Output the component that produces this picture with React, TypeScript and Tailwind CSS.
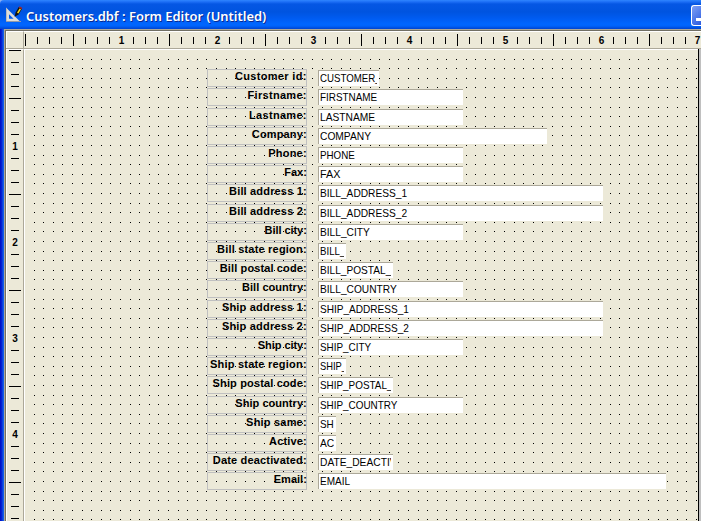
type Row = { label: string; tracking: string; value: string; scale: string; width: string; height: string };

const rows: Row[] = [
  { label: "Customer id:", tracking: "tracking-[0.34px]", value: "CUSTOMER_", scale: "scale-x-[0.88]", width: "w-[61px]", height: "h-[19px]" },
  { label: "Firstname:", tracking: "tracking-[0.3px]", value: "FIRSTNAME", scale: "scale-x-[0.9]", width: "w-[145px]", height: "h-5" },
  { label: "Lastname:", tracking: "tracking-[0.3px]", value: "LASTNAME", scale: "scale-x-[0.93]", width: "w-[145px]", height: "h-[19px]" },
  { label: "Company:", tracking: "tracking-[0.15px]", value: "COMPANY", scale: "scale-x-[0.93]", width: "w-[229px]", height: "h-[19px]" },
  { label: "Phone:", tracking: "tracking-[0.2px]", value: "PHONE", scale: "scale-x-[0.89]", width: "w-[145px]", height: "h-[19px]" },
  { label: "Fax:", tracking: "tracking-normal", value: "FAX", scale: "scale-x-[0.98]", width: "w-[145px]", height: "h-[19px]" },
  { label: "Bill address 1:", tracking: "tracking-[0.17px]", value: "BILL_ADDRESS_1", scale: "scale-x-[0.925]", width: "w-[285px]", height: "h-5" },
  { label: "Bill address 2:", tracking: "tracking-[0.17px]", value: "BILL_ADDRESS_2", scale: "scale-x-[0.925]", width: "w-[285px]", height: "h-[19px]" },
  { label: "Bill city:", tracking: "tracking-[-0.05px]", value: "BILL_CITY", scale: "scale-x-[0.925]", width: "w-[145px]", height: "h-[19px]" },
  { label: "Bill state region:", tracking: "tracking-[0.2px]", value: "BILL_", scale: "scale-x-[0.88]", width: "w-[28px]", height: "h-[19px]" },
  { label: "Bill postal code:", tracking: "tracking-[0.12px]", value: "BILL_POSTAL_", scale: "scale-x-[0.92]", width: "w-[75px]", height: "h-[19px]" },
  { label: "Bill country:", tracking: "tracking-[0.05px]", value: "BILL_COUNTRY", scale: "scale-x-[0.925]", width: "w-[145px]", height: "h-5" },
  { label: "Ship address 1:", tracking: "tracking-[0.2px]", value: "SHIP_ADDRESS_1", scale: "scale-x-[0.915]", width: "w-[285px]", height: "h-[19px]" },
  { label: "Ship address 2:", tracking: "tracking-[0.2px]", value: "SHIP_ADDRESS_2", scale: "scale-x-[0.915]", width: "w-[285px]", height: "h-[19px]" },
  { label: "Ship city:", tracking: "tracking-[-0.05px]", value: "SHIP_CITY", scale: "scale-x-[0.9]", width: "w-[145px]", height: "h-[19px]" },
  { label: "Ship state region:", tracking: "tracking-[0.22px]", value: "SHIP_", scale: "scale-x-[0.85]", width: "w-[28px]", height: "h-[19px]" },
  { label: "Ship postal code:", tracking: "tracking-[0.15px]", value: "SHIP_POSTAL_", scale: "scale-x-[0.9]", width: "w-[75px]", height: "h-5" },
  { label: "Ship country:", tracking: "tracking-[0.05px]", value: "SHIP_COUNTRY", scale: "scale-x-[0.9]", width: "w-[145px]", height: "h-[19px]" },
  { label: "Ship same:", tracking: "tracking-[0.2px]", value: "SH", scale: "scale-x-[0.9]", width: "w-[18px]", height: "h-[19px]" },
  { label: "Active:", tracking: "tracking-[0.15px]", value: "AC", scale: "scale-x-[0.93]", width: "w-[18px]", height: "h-[19px]" },
  { label: "Date deactivated:", tracking: "tracking-[0.17px]", value: "DATE_DEACTIV", scale: "scale-x-[0.93]", width: "w-[75px]", height: "h-[19px]" },
  { label: "Email:", tracking: "tracking-normal", value: "EMAIL", scale: "scale-x-[0.91]", width: "w-[348px]", height: "h-[19px]" },
];

function TitleIcon() {
  return (
    <svg width="18" height="18" viewBox="0 0 18 18" className="mt-[5px] ml-[5px] shrink-0">
      <path fillRule="evenodd" d="M1 2.5L15.5 17H1zM4 9.2V13.8H8.6z" fill="#dededa" />
      <path d="M1 16.5h15" stroke="#8f98a8" />
      <path d="M1.5 3v13" stroke="#b9bcc0" />
      <path d="M9.6 11.8L10.6 7.6L13.8 2L17 3.8L13.6 9.6Z" fill="#111" />
      <path d="M12 7.8L14.6 3.4L16 4.2L13.4 8.6Z" fill="#f8d820" />
      <path d="M14.2 2L17 3.6" stroke="#a82424" strokeWidth="1.5" />
    </svg>
  );
}

function TitleBar() {
  return (
    <div className="flex h-[29px] shrink-0 rounded-tl-[4px] bg-[linear-gradient(to_bottom,#2f86ff_0px,#1b6df5_2px,#0557e4_4px,#0054e0_12px,#005bf0_18px,#0066ff_24px,#0063fb_26px,#0043cf_29px)]">
      <TitleIcon />
      <div className="mt-2 ml-[3px] h-5 whitespace-nowrap font-['Noto_Sans','Open_Sans',sans-serif] text-[13px] leading-[17px] font-semibold text-white [text-shadow:1px_1px_0_#0a2a90]">
        <span className="inline-block origin-left scale-x-[0.995]">Customers.dbf : Form Editor (Untitled)</span>
      </div>
      <div className="mt-[5px] ml-auto flex h-[21px] w-[10px] items-end rounded-l-[3px] border border-r-0 border-white bg-[linear-gradient(135deg,#7ea0f5,#2b5be0)] pb-1 pl-1">
        <div className="h-[3px] w-full bg-white" />
      </div>
    </div>
  );
}

const hTicks = Array.from({ length: 57 }, (_, i) => i);
const vTicks = Array.from({ length: 40 }, (_, i) => i);

function TopRuler() {
  return (
    <div className="-ml-[5px] flex h-4">
      {hTicks.map((i) => (
        <div key={i} className="flex h-4 w-3 shrink-0 items-center justify-center">
          {i > 0 && i % 8 === 0 ? (
            <span className="pt-0.5 pl-px font-['Liberation_Sans',Arial,sans-serif] text-[10px] leading-3 font-bold">{i / 8}</span>
          ) : (
            <div className={i % 4 === 0 ? "h-3 w-px bg-black" : "h-[7px] w-px bg-black"} />
          )}
        </div>
      ))}
    </div>
  );
}

function LeftRuler() {
  return (
    <div className="-mt-[6px] flex w-4 flex-col">
      {vTicks.map((i) => (
        <div key={i} className="flex h-3 w-4 shrink-0 items-center justify-center">
          {i > 0 && i % 8 === 0 ? (
            <span className="pt-px font-['Liberation_Sans',Arial,sans-serif] text-[10px] leading-3 font-bold">{i / 8}</span>
          ) : (
            <div className={i % 4 === 0 ? "h-px w-3 bg-black" : "h-px w-2 bg-black"} />
          )}
        </div>
      ))}
    </div>
  );
}

function GridDots() {
  const dots: string[] = [];
  for (let r = 1; r < 50; r++) {
    for (let c = 1; c <= 70; c++) {
      dots.push(`M${Math.round(9.6 * c)} ${Math.round(9.6 * r)}h1v1h-1z`);
    }
  }
  return (
    <svg width="674" height="472" className="absolute top-0 left-0" shapeRendering="crispEdges">
      <path d={dots.join("")} fill="#000" />
    </svg>
  );
}

function FormCanvas() {
  return (
    <div className="relative h-[472px] w-[674px] shrink-0 overflow-hidden">
      <div className="flex h-full flex-col border-t border-l border-white pt-[19px] pl-[182px] font-['Liberation_Sans',Arial,sans-serif] text-[11px] text-black">
        <GridDots />
        {rows.map((row) => (
          <div key={row.label} className={`relative flex shrink-0 items-start ${row.height}`}>
            <div className="h-[18px] w-[100px] border border-[#c0c0c0] text-right leading-[13px] font-bold whitespace-nowrap">
              <span className={`-mr-[0.8px] ${row.tracking}`}>{row.label}</span>
            </div>
            <div
              className={`mt-px ml-[11px] h-4 shrink-0 border-t border-l border-[#aca899] bg-white pr-0.5 pl-px leading-[15px] whitespace-nowrap ${row.width}`}
            >
              <div className="h-[15px] overflow-hidden">
                <span className={`inline-block origin-left ${row.scale}`}>{row.value}</span>
              </div>
            </div>
          </div>
        ))}
      </div>
    </div>
  );
}

export default function App() {
  return (
    <div className="flex h-[521px] w-[701px] flex-col overflow-hidden bg-[#8fb0f0]">
      <TitleBar />
      <div className="flex flex-1">
        <div className="w-1 shrink-0 bg-[linear-gradient(to_right,#0011c8_0px,#0011c8_1px,#0831d9_2px,#166aee_4px)]" />
        <div className="flex-1 border-t border-l border-[#aca899] bg-[#ece9d8]">
          <div className="flex h-full flex-col border-t border-l border-[#716f64]">
            <div className="flex h-[18px] shrink-0 border-b border-[#aca899]">
              <div className="h-[17px] w-[18px] shrink-0 border-t border-l border-r border-white border-r-[#aca899]" />
              <div className="h-[17px] w-[677px] overflow-hidden border-t border-white">
                <TopRuler />
              </div>
            </div>
            <div className="flex flex-1">
              <div className="h-[472px] w-[18px] shrink-0 overflow-hidden border-t border-l border-r border-white border-r-[#aca899]">
                <LeftRuler />
              </div>
              <FormCanvas />
              <div className="w-px bg-black" />
              <div className="flex-1 bg-[#c0c0c0]" />
            </div>
          </div>
        </div>
      </div>
    </div>
  );
}
